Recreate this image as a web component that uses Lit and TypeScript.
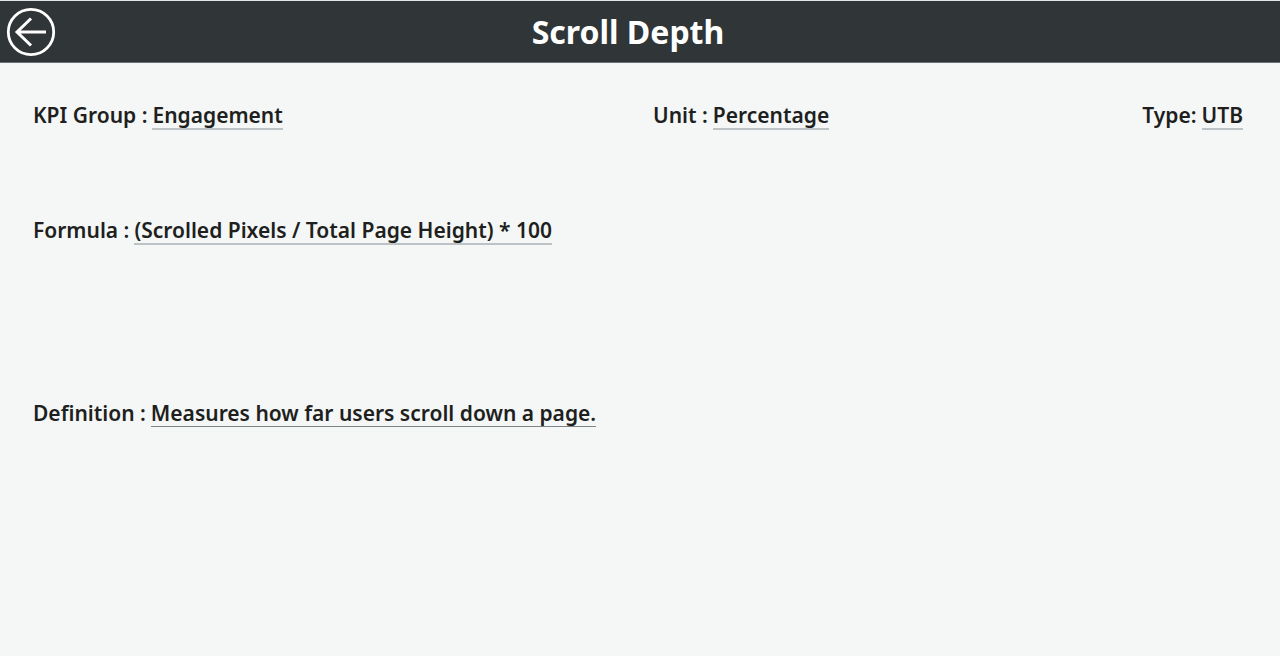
import { LitElement, html, css } from "lit";
import { customElement, property } from "lit/decorators.js";

@customElement("kpi-field")
class KpiField extends LitElement {
  @property() label = "";
  @property() value = "";
  @property({ type: Boolean }) strong = false;

  static styles = css`
    :host {
      display: block;
      line-height: 26px;
    }
    .field {
      margin: 0;
      display: flex;
      align-items: flex-start;
      gap: 5px;
    }
    .label {
      white-space: nowrap;
    }
    .value {
      margin: 0;
      border-bottom: 2px solid #bdc3c5;
    }
    .value.strong {
      border-bottom: 1px solid #7d8588;
    }
  `;

  render() {
    return html`<dl class="field">
      <dt class="label">${this.label}</dt>
      <dd class="value ${this.strong ? "strong" : ""}">${this.value}</dd>
    </dl>`;
  }
}

@customElement("app-root")
class AppRoot extends LitElement {
  static styles = css`
    :host {
      display: block;
      min-height: 100vh;
      background: #f4f7f6;
      color: #201f1e;
      font-family: "Segoe UI", "Noto Sans", "Open Sans", sans-serif;
      font-size: 21px;
      font-weight: 600;
    }
    .bar {
      display: grid;
      grid-template-columns: 64px 1fr 88px;
      align-items: center;
      height: 61px;
      border-top: 1px solid #dfe6e5;
      border-bottom: 1px solid #6b7274;
      background: #303638;
      color: #fff;
    }
    .back {
      display: block;
      width: 50px;
      height: 50px;
      margin-left: 6px;
      padding: 0;
      border: 0;
      background: none;
      color: inherit;
      cursor: pointer;
    }
    .back svg {
      display: block;
    }
    .title {
      margin: 0;
      text-align: center;
      font-size: 32px;
      line-height: 44px;
      font-weight: 700;
    }
    .details {
      display: grid;
      padding: 39px 37px 32px 33px;
    }
    .summary {
      display: grid;
      grid-template-columns: 1fr 1fr;
      gap: 30px;
      margin-bottom: 87px;
    }
    .measure {
      display: flex;
      justify-content: space-between;
      gap: 30px;
    }
    .formula {
      margin-bottom: 155px;
    }
  `;

  render() {
    return html`
      <header class="bar">
        <button class="back" type="button" aria-label="Back">
          <svg width="50" height="50" viewBox="0 0 50 50" fill="none" stroke="currentColor">
            <circle cx="25" cy="25" r="22.7" stroke-width="2.8" />
            <path d="M40 25H11M25 11.5L11 25L25 38.5" stroke-width="3" />
          </svg>
        </button>
        <h1 class="title">Scroll Depth</h1>
      </header>
      <main class="details">
        <section class="summary">
          <kpi-field label="KPI Group :" value="Engagement"></kpi-field>
          <div class="measure">
            <kpi-field label="Unit :" value="Percentage"></kpi-field>
            <kpi-field label="Type:" value="UTB"></kpi-field>
          </div>
        </section>
        <kpi-field class="formula" label="Formula :" value="(Scrolled Pixels / Total Page Height) * 100"></kpi-field>
        <kpi-field
          label="Definition :"
          value="Measures how far users scroll down a page."
          strong
        ></kpi-field>
      </main>
    `;
  }
}
